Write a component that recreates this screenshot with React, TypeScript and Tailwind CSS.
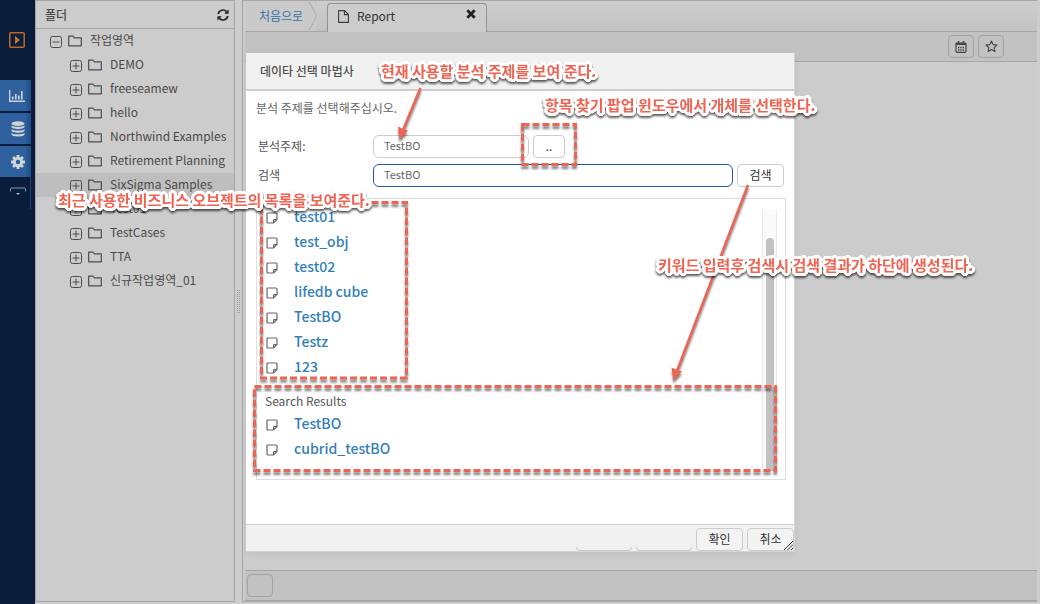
import type { ReactNode } from "react";

const tree = [
  "DEMO",
  "freeseamew",
  "hello",
  "Northwind Examples",
  "Retirement Planning",
  "SixSigma Samples",
  "Test01",
  "TestCases",
  "TTA",
  "신규작업영역_01",
];

const recent = ["test01", "test_obj", "test02", "lifedb cube", "TestBO", "Testz", "123"];
const results = ["TestBO", "cubrid_testBO"];

function ToggleIcon({ open }: { open?: boolean }) {
  return (
    <svg className="h-3 w-3 shrink-0" viewBox="0 0 12 12" fill="none" stroke="#4c4c4c" strokeWidth="1">
      <rect x="0.5" y="0.5" width="11" height="11" rx="2" />
      <path d={open ? "M2.500 6h7" : "M2.500 6h7M6 2.500v7"} />
    </svg>
  );
}

function FolderIcon() {
  return (
    <svg className="h-3 w-3.5 shrink-0" viewBox="0 0 14 12" fill="none" stroke="#4c4c4c" strokeWidth="1.2">
      <path d="M0.7 1.2h4.2l1.4 1.6h7v8H0.7z" strokeLinejoin="round" />
    </svg>
  );
}

function NoteIcon() {
  return (
    <svg className="mt-1 h-3 w-3 shrink-0" viewBox="0 0 12 12" fill="none" stroke="#666" strokeWidth="1.2">
      <path d="M2 1h8q1 0 1 1v5.6L7.6 11H2q-1 0-1-1V2q0-1 1-1z" />
      <path d="M11 7.6H8.2q-.6 0-.6.6V11" />
    </svg>
  );
}

function TreeRow({ label, open, root, active }: { label: string; open?: boolean; root?: boolean; active?: boolean }) {
  return (
    <li className={`flex h-6 items-center pb-0.5 ${root ? "pl-3.5" : "pl-[34px]"} ${active ? "bg-[#bebebe]" : ""}`}>
      <button type="button" aria-label={label} className="mt-1">
        <ToggleIcon open={open} />
      </button>
      <span className="mt-0.5 ml-1.5">
        <FolderIcon />
      </span>
      <span className="ml-2 text-xs leading-5 whitespace-nowrap text-[#4a4a4a]">{label}</span>
    </li>
  );
}

function ListRow({ label }: { label: string }) {
  return (
    <li className="flex h-[25px] items-center gap-4 pb-0.5 pl-[9px]">
      <NoteIcon />
      <a href="#item" className="text-sm leading-6 font-medium text-[#337fb7]">
        {label}
      </a>
    </li>
  );
}

function RailButton({ label, children }: { label: string; children: ReactNode }) {
  return (
    <button
      type="button"
      aria-label={label}
      className="flex h-[31px] w-[31px] items-center justify-end bg-linear-to-r from-[#2d609c] from-80% to-[#214f86] pr-1.5"
    >
      {children}
    </button>
  );
}

function Callout({ className, children }: { className: string; children: ReactNode }) {
  return (
    <span
      className={`absolute text-[15px] leading-6 font-bold whitespace-nowrap text-[#ee6352] [filter:drop-shadow(0_2px_1px_rgba(0,0,0,0.65))] [text-shadow:3px_0_#fff,-3px_0_#fff,0_3px_#fff,0_-3px_#fff,2px_2px_#fff,-2px_2px_#fff,2px_-2px_#fff,-2px_-2px_#fff,1px_3px_#fff,-1px_3px_#fff,1px_-3px_#fff,-1px_-3px_#fff,3px_1px_#fff,3px_-1px_#fff,-3px_1px_#fff,-3px_-1px_#fff,1px_1px_#fff,-1px_-1px_#fff] ${className}`}
    >
      {children}
    </span>
  );
}

function Rail() {
  return (
    <nav className="flex w-[35px] shrink-0 flex-col bg-[#0a1d3b]">
      <button type="button" aria-label="실행" className="mt-8 ml-[9px] h-4 w-4">
        <svg className="h-4 w-4" viewBox="0 0 16 16">
          <rect x="0.8" y="0.8" width="14.4" height="14.4" rx="1" fill="none" stroke="#b8682a" strokeWidth="1.5" />
          <path d="M6 4l5 4-5 4z" fill="#c87430" />
        </svg>
      </button>
      <div className="mt-8 flex flex-col gap-0.5">
        <RailButton label="차트">
          <svg className="h-3.5 w-4" viewBox="0 0 16 14" fill="none" stroke="#c9d1dc">
            <path d="M0.7 1v11.2H16" strokeWidth="1.4" />
            <path d="M3.8 10.500V7.5M6.8 10.500V5M9.8 10.500V6.5M12.8 10.500V2" strokeWidth="1.7" />
          </svg>
        </RailButton>
        <RailButton label="데이터">
          <svg className="h-4 w-3.5" viewBox="0 0 14 16" fill="#d0d3d8">
            <ellipse cx="7" cy="2.6" rx="6.5" ry="2.3" />
            <path d="M.5 4.2c1 2 12 2 13 0v1.6c0 3-13 3-13 0zM.5 8c1 2 12 2 13 0v1.6c0 3-13 3-13 0zM.5 11.8c1 2 12 2 13 0v1.4c0 3-13 3-13 0z" />
          </svg>
        </RailButton>
        <RailButton label="설정">
          <svg className="h-3.5 w-3.5" viewBox="0 0 14 14" fill="none" stroke="#d0d3d8">
            <circle cx="7" cy="7" r="3.7" strokeWidth="3" />
            <path
              d="M7 0v2.4M7 11.6V14M0 7h2.4M11.6 7H14M2.05 2.05l1.7 1.7M10.25 10.25l1.7 1.7M11.95 2.05l-1.7 1.7M3.75 10.25l-1.7 1.7"
              strokeWidth="2.8"
            />
          </svg>
        </RailButton>
      </div>
      <button type="button" aria-label="더 보기" className="flex h-8 w-[31px] justify-end border-r border-[#1d4373] pt-2.5 pr-1">
        <svg className="h-3 w-4" viewBox="0 0 16 12" fill="none" stroke="#7f98b8">
          <path d="M.5 4.500V2q0-1 1-1h13q1 0 1 1v2.500" />
          <path d="M6 6h4l-2 2z" fill="#aab9cc" stroke="none" />
        </svg>
      </button>
    </nav>
  );
}

function FolderPanel() {
  return (
    <aside className="mb-0.5 w-[200px] shrink-0 border border-[#a6a6a6] bg-[#ccc]">
      <header className="flex h-7 items-center justify-between border-b border-[#a6a6a6] pr-[5px] pl-[9px]">
        <h2 className="text-xs leading-5 font-medium text-[#4a4a4a]">폴더</h2>
        <button type="button" aria-label="새로 고침">
          <svg className="h-3 w-3" viewBox="0 0 12 12" fill="none" stroke="#222" strokeWidth="1.7">
            <path d="M1.2 5A4.9 4.9 0 0 1 9.6 2.6M10.8 7A4.9 4.9 0 0 1 2.4 9.4" />
            <path d="M11.6.4v4.4H7.2zM.4 11.6V7.2h4.4z" fill="#222" stroke="none" />
          </svg>
        </button>
      </header>
      <ul>
        <TreeRow label="작업영역" open root />
        {tree.map((name) => (
          <TreeRow key={name} label={name} active={name === "SixSigma Samples"} />
        ))}
      </ul>
    </aside>
  );
}

function Workspace() {
  return (
    <main className="mr-[3px] mb-0.5 flex min-w-0 flex-1 flex-col border border-r-0 border-[#a6a6a6] bg-[#ccc] pl-0.5">
      <div className="flex h-[31px] items-end border-b border-[#a6a6a6] bg-linear-to-b from-[#cecece] to-[#c2c2c2]">
        <div className="flex h-full w-[72px] items-center bg-[#cacaca] pl-3.5">
          <a href="#home" className="text-xs leading-5 whitespace-nowrap text-[#3573a3]">
            처음으로
          </a>
          <svg className="ml-1.5 h-[30px] w-2 shrink-0" viewBox="0 0 8 30" fill="none" stroke="#a8a8a8">
            <path d="M.5 1l7 14-7 14" />
          </svg>
        </div>
        <div className="-mb-px ml-2.5 flex h-[29px] w-40 items-center rounded-t border border-b-0 border-[#929292] bg-[#ccc] px-2.5 pb-1">
          <svg className="h-[13px] w-[11px]" viewBox="0 0 11 13" fill="none" stroke="#3c3c3c" strokeWidth="1.1">
            <path d="M.6.6h6l3.8 3.8v8H.6zM6.4.8v3.8h3.8" />
          </svg>
          <span className="ml-2 flex-1 text-xs leading-5 text-[#333]">Report</span>
          <button type="button" aria-label="닫기" className="-mt-1">
            <svg className="h-2.5 w-2.5" viewBox="0 0 10 10" stroke="#222" strokeWidth="2.8">
              <path d="M1.3 1.3l7.4 7.4M8.7 1.3L1.3 8.7" />
            </svg>
          </button>
        </div>
      </div>
      <div className="flex h-[30px] items-center justify-end gap-1 border-b border-[#a6a6a6] bg-[#c2c2c2] pr-[33px]">
        <button type="button" aria-label="일정" className="flex h-[23px] w-[26px] items-center justify-center rounded-sm border border-[#a2a2a2]">
          <svg className="h-3 w-3" viewBox="0 0 12 12" fill="none" stroke="#444">
            <rect x="1" y="2" width="10" height="9.3" rx="1" strokeWidth="1.2" />
            <path d="M1 3h10" strokeWidth="2" />
            <path d="M3.5 0v2M8.5 0v2" strokeWidth="1.5" />
            <path d="M3 6.5h6M3 9h6" strokeWidth="1.3" strokeDasharray="1.4 0.9" />
          </svg>
        </button>
        <button type="button" aria-label="즐겨찾기" className="flex h-[23px] w-[26px] items-center justify-center rounded-sm border border-[#a2a2a2]">
          <svg className="h-[13px] w-[13px]" viewBox="0 0 13 13" fill="none" stroke="#444" strokeWidth="1.1">
            <path d="M6.5 1l1.6 3.6 3.9.4-2.9 2.6.8 3.9-3.4-2-3.4 2 .8-3.9L1 5l3.9-.4z" strokeLinejoin="round" />
          </svg>
        </button>
      </div>
      <div className="flex-1" />
      <footer className="flex h-[31px] items-center border-t border-b border-[#a6a6a6] bg-[#c2c2c2] pl-0.5">
        <button type="button" aria-label="시트" className="h-[23px] w-[26px] rounded-sm border border-[#a2a2a2]" />
      </footer>
    </main>
  );
}

function WizardDialog() {
  return (
    <section
      role="dialog"
      aria-labelledby="wizard-title"
      className="absolute top-[53px] left-[246px] flex w-[549px] flex-col border-r border-b border-[#d4d4d4] bg-white text-xs text-[#555] shadow-[0_2px_6px_rgba(0,0,0,0.06)]"
    >
      <header className="flex h-[38px] items-center border-b-2 border-[#cdcdcd] bg-[#f1f1f1] pl-3.5">
        <h1 id="wizard-title" className="text-xs leading-5 font-medium text-[#505050]">
          데이타 선택 마법사
        </h1>
      </header>
      <div className="px-2 pt-[7px] pb-11">
        <p className="ml-0.5 leading-5 text-[#666]">분석 주제를 선택해주십시오.</p>
        <div className="mt-4 flex h-6 items-center pl-1">
          <label htmlFor="subject" className="w-[115px]">
            분석주제:
          </label>
          <input
            id="subject"
            defaultValue="TestBO"
            className="h-[23px] w-[156px] rounded-md border border-[#ccc] bg-white px-2.5 pb-0.5 text-[11px] text-[#666] outline-none"
          />
          <button type="button" className="ml-1 h-[23px] w-8 rounded-sm border border-[#ccc] bg-white leading-5 text-[#333]">
            ..
          </button>
        </div>
        <div className="mt-[5px] flex h-6 items-center pl-1">
          <label htmlFor="keyword" className="w-[115px]">
            검색
          </label>
          <input
            id="keyword"
            defaultValue="TestBO"
            className="h-[23px] w-[360px] rounded-md border border-[#2457a3] bg-white px-2.5 pb-0.5 text-[11px] text-[#666] outline-none"
          />
          <button type="button" className="ml-1 h-[23px] w-[47px] rounded-sm border border-[#ccc] bg-white pb-0.5 leading-5 text-[#333]">
            검색
          </button>
        </div>
        <div className="mt-[11px] ml-0.5 flex h-[282px] w-[530px] border border-[#ddd] pt-[5px]">
          <div className="min-w-0 flex-1">
            <ul>
              {recent.map((name) => (
                <ListRow key={name} label={name} />
              ))}
            </ul>
            <h2 className="mt-3 pl-2 leading-5 font-normal">Search Results</h2>
            <ul>
              {results.map((name) => (
                <ListRow key={name} label={name} />
              ))}
            </ul>
          </div>
          <div className="mt-1.5 mr-2 mb-2 flex w-[15px] justify-center border-x border-[#e8e8e8] bg-[#fafafa] pt-7">
            <div className="w-2 rounded-t bg-[#c1c1c1]" />
          </div>
        </div>
      </div>
      <footer className="flex h-[27px] items-end justify-end gap-1 border-t border-[#ccc] bg-[#f1f1f1]">
        <span className="h-1 w-14 rounded-b-sm border border-t-0 border-[#ccc]" />
        <span className="h-1 w-14 rounded-b-sm border border-t-0 border-[#ccc]" />
        <button type="button" className="h-[23px] w-[47px] rounded-sm border border-[#ccc] bg-[#f3f3f3] pb-0.5 leading-5 text-[#333]">
          확인
        </button>
        <button type="button" className="relative h-[23px] w-[47px] rounded-sm border border-[#ccc] bg-[#f3f3f3] pb-0.5 leading-5 text-[#333]">
          취소
          <svg className="absolute right-0 bottom-0 h-[9px] w-[9px]" viewBox="0 0 9 9" stroke="#333">
            <path d="M0 9l9-9M3.5 9L9 3.5M7 9l2-2" />
          </svg>
        </button>
      </footer>
    </section>
  );
}

function Annotations() {
  return (
    <div className="pointer-events-none absolute inset-0 overflow-hidden">
      <svg
        className="absolute top-0 left-0 h-[604px] w-[1040px] [filter:drop-shadow(0_3px_1px_rgba(0,0,0,0.5))]"
        viewBox="0 0 1040 604"
        fill="none"
        stroke="#ee6352"
      >
        <g strokeWidth="3" strokeDasharray="7 3">
          <rect x="522.500" y="124.500" width="53" height="40" />
          <rect x="261.500" y="202.500" width="145" height="175.500" />
          <rect x="254.500" y="386.500" width="521" height="84" />
        </g>
        <path d="M420.500 88L403.500 129" strokeWidth="2.5" />
        <path d="M748 185L677 371" strokeWidth="2.5" />
        <g fill="#ee6352" stroke="none">
          <path d="M399.500 139.500L398 126.500L403.500 129L408 130.500z" />
          <path d="M673.500 380.500L671.500 367.500L677 370L682 371.500z" />
        </g>
      </svg>
      <Callout className="top-[59px] left-[381px]">현재 사용할 분석 주제를 보여 준다.</Callout>
      <Callout className="top-[93px] left-[545px]">항목 찾기 팝업 윈도우에서 개체를 선택한다.</Callout>
      <Callout className="top-[188px] left-[58px]">최근 사용한 비즈니스 오브젝트의 목록을 보여준다.</Callout>
      <Callout className="top-[253px] left-[658px]">키워드 입력후 검색시 검색 결과가 하단에 생성된다.</Callout>
    </div>
  );
}

export default function App() {
  return (
    <div className="relative flex min-h-screen bg-[#cdcdcd] font-['Noto_Sans_CJK_KR',sans-serif]">
      <Rail />
      <FolderPanel />
      <div className="flex w-[7px] shrink-0 items-center justify-center">
        <svg className="h-6 w-[3px]" viewBox="0 0 3 24" stroke="#999" strokeDasharray="1 1">
          <path d="M.5 0v24M2.500 0v24" />
        </svg>
      </div>
      <Workspace />
      <WizardDialog />
      <Annotations />
    </div>
  );
}
